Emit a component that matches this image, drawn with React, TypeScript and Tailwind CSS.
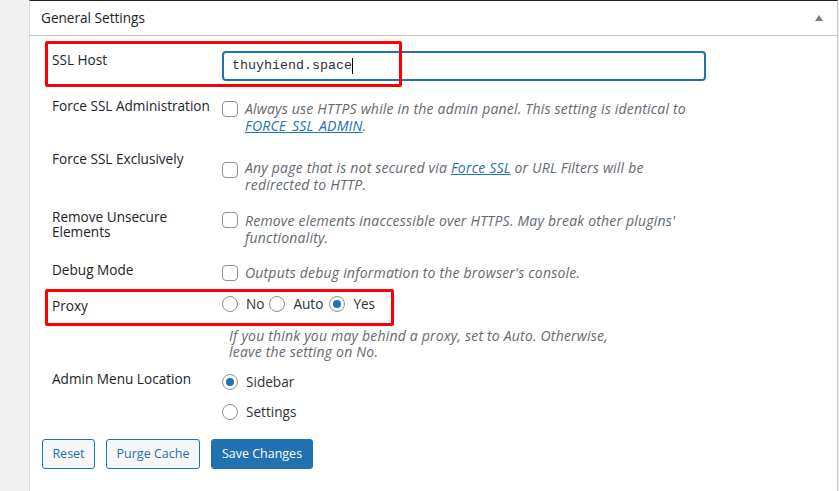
import React from 'react';

const font = { fontFamily: '"Segoe UI", "Open Sans", sans-serif' };

function Checkbox() {
  return <span className="block w-4 h-4 shrink-0 rounded-[4px] border border-[#8c8f94] bg-white" />;
}

function Radio({ checked = false }: { checked?: boolean }) {
  return (
    <span className="flex w-4 h-4 shrink-0 items-center justify-center rounded-full border border-[#8c8f94] bg-white">
      {checked && <span className="block w-2 h-2 rounded-full bg-[#2271b1]" />}
    </span>
  );
}

function Desc({ lines, className = '' }: { lines: React.ReactNode[]; className?: string }) {
  return (
    <div className={`italic text-[14px] tracking-[0.2px] leading-[17px] text-[#646970] ${className}`}>
      {lines.map((l, i) => (
        <div key={i} className="whitespace-nowrap">{l}</div>
      ))}
    </div>
  );
}

const link = 'text-[#2271b1] underline';
const label = 'w-[180px] pl-[10px] leading-[18px] text-[13.6px] text-[#1d2327]';

export default function App() {
  return (
    <div className="relative flex min-h-screen bg-[#f0f0f1] text-[#1d2327]" style={font}>
      <div className="w-[29px] shrink-0" />
      <div className="flex-1 flex flex-col bg-white border-l border-r border-t border-l-[#dcdcde] border-r-[#c3c4c7] border-t-[#1d2327] mr-[1px] min-h-[491px]">
        <div className="h-[35px] flex items-center justify-between border-b border-[#c3c4c7] pl-[11px] pr-[14px]">
          <h2 className="text-[13.6px] font-medium">General Settings</h2>
          <svg width="8" height="6" viewBox="0 0 8 6">
            <path d="M4 0 L8 6 L0 6 Z" fill="#787c82" />
          </svg>
        </div>

        <div className="pl-[12px] flex flex-col">
          {/* SSL Host */}
          <div className="flex h-[55px]">
            <div className={`${label} pt-[15px]`}>SSL Host</div>
            <div className="pt-[15px]">
              <div className="w-[484px] h-[30px] rounded-[4px] border-2 border-[#2271b1] flex items-center pl-[8px]">
                <span className="text-[13.33px] text-[#2c3338]" style={{ fontFamily: '"Liberation Mono", monospace' }}>
                  thuyhiend.space
                </span>
                <span className="block w-[1px] h-[16px] bg-black" />
              </div>
            </div>
          </div>

          {/* Force SSL Administration */}
          <div className="flex h-[55px]">
            <div className={`${label} pt-[6px]`}>Force SSL Administration</div>
            <div className="flex items-start gap-[7px]">
              <div className="mt-[10px]"><Checkbox /></div>
              <Desc
                className="mt-[9px]"
                lines={[
                  'Always use HTTPS while in the admin panel. This setting is identical to',
                  <><span className={link}>FORCE_SSL_ADMIN</span>.</>,
                ]}
              />
            </div>
          </div>

          {/* Force SSL Exclusively */}
          <div className="flex h-[54px]">
            <div className={`${label} pt-[4px]`}>Force SSL Exclusively</div>
            <div className="flex items-start gap-[7px]">
              <div className="mt-[16px]"><Checkbox /></div>
              <Desc
                className="mt-[13px]"
                lines={[
                  <>Any page that is not secured via <span className={link}>Force SSL</span> or URL Filters will be</>,
                  'redirected to HTTP.',
                ]}
              />
            </div>
          </div>

          {/* Remove Unsecure Elements */}
          <div className="flex h-[52px]">
            <div className="w-[180px] pl-[10px] pt-[9px] leading-[15px] text-[13.6px] text-[#1d2327]">
              Remove Unsecure
              <br />
              Elements
            </div>
            <div className="flex items-start gap-[7px]">
              <div className="mt-[12px]"><Checkbox /></div>
              <Desc
                className="mt-[12px]"
                lines={['Remove elements inaccessible over HTTPS. May break other plugins\'', 'functionality.']}
              />
            </div>
          </div>

          {/* Debug Mode */}
          <div className="flex h-[36px]">
            <div className={`${label} pt-[9px]`}>Debug Mode</div>
            <div className="flex items-start gap-[7px]">
              <div className="mt-[13px]"><Checkbox /></div>
              <Desc className="mt-[12px]" lines={["Outputs debug information to the browser's console."]} />
            </div>
          </div>

          {/* Proxy */}
          <div className="flex h-[32px]">
            <div className={`${label} pt-[9px]`}>Proxy</div>
            <div className="flex items-center mt-[8px] h-4 text-[13.6px] text-[#2c3338]">
              <Radio />
              <span className="ml-[8px] mr-[5px]">No</span>
              <Radio />
              <span className="ml-[8px] mr-[6px]">Auto</span>
              <Radio checked />
              <span className="ml-[8px]">Yes</span>
            </div>
          </div>
          <div className="pl-[187px] h-[42px]">
            <Desc
              className="mt-[8px] !leading-[16px]"
              lines={['If you think you may behind a proxy, set to Auto. Otherwise,', 'leave the setting on No.']}
            />
          </div>

          {/* Admin Menu Location */}
          <div className="flex">
            <div className={`${label} pt-[8px]`}>Admin Menu Location</div>
            <div className="flex flex-col gap-[14px] mt-[12px] text-[13.6px] text-[#2c3338]">
              <label className="flex items-center h-4">
                <Radio checked />
                <span className="ml-[8px]">Sidebar</span>
              </label>
              <label className="flex items-center h-4">
                <Radio />
                <span className="ml-[8px]">Settings</span>
              </label>
            </div>
          </div>

          {/* Buttons */}
          <div className="flex gap-[11px] mt-[19px] text-[12.5px]">
            <button className="h-[30px] w-[53px] rounded-[3px] border border-[#2271b1] bg-[#f6f7f7] text-[#2271b1]">Reset</button>
            <button className="h-[30px] w-[94px] rounded-[3px] border border-[#2271b1] bg-[#f6f7f7] text-[#2271b1]">Purge Cache</button>
            <button className="h-[30px] w-[102px] rounded-[3px] border border-[#2271b1] bg-[#2271b1] text-white">Save Changes</button>
          </div>
        </div>
      </div>

      {/* red annotation boxes */}
      <div className="absolute left-[45px] top-[41px] w-[357px] h-[46px] border-[3px] border-[#ff0000] rounded-[2px] pointer-events-none" />
      <div className="absolute left-[45px] top-[289px] w-[349px] h-[37px] border-[3px] border-[#ff0000] rounded-[2px] pointer-events-none" />
    </div>
  );
}
